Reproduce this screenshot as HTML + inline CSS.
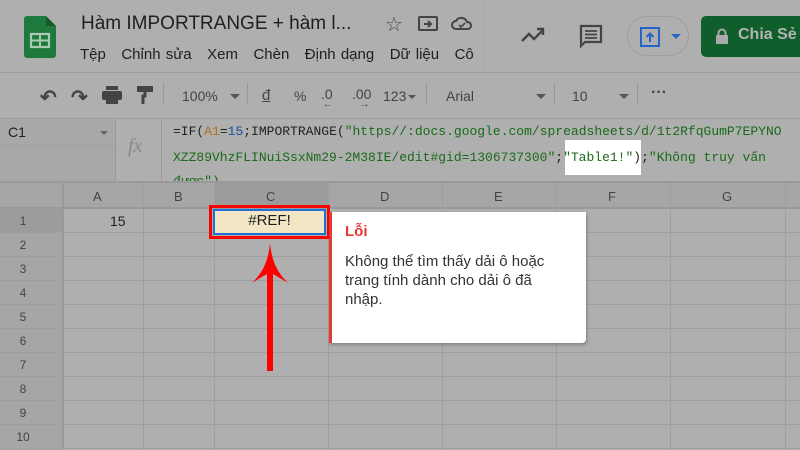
<!DOCTYPE html>
<html><head><meta charset="utf-8"><style>
*{margin:0;padding:0;box-sizing:border-box}
body{width:800px;height:450px;overflow:hidden;background:#afafaf;font-family:"Liberation Sans",Arial,sans-serif;position:relative;color:#202020}
.a{position:absolute;white-space:nowrap}
.mono{font-family:"Liberation Mono",monospace;font-size:13px;color:#1a6a1a}
.hl{position:absolute;background:#9f9f9f}
.vl{position:absolute;background:#9f9f9f}
.rn{position:absolute;left:0;width:46px;text-align:center;font-size:12px;color:#444}
</style></head><body>
<!-- top bar -->
<div class="a" style="left:0;top:72px;width:800px;height:1px;background:#9c9c9c"></div>
<div class="a" style="left:483px;top:0;width:1px;height:72px;background:#a5a5a5"></div>
<svg class="a" style="left:24px;top:16px" width="32" height="42" viewBox="0 0 32 42"><path d="M3 0h19l10 10v29a3 3 0 0 1-3 3H3a3 3 0 0 1-3-3V3a3 3 0 0 1 3-3z" fill="#1e7a3c"/><path d="M22 0v10h10z" fill="#155c2c"/><rect x="7" y="18" width="18" height="13" fill="none" stroke="#a9c9b2" stroke-width="2.2"/><path d="M7 24.5h18M16 18v13" stroke="#a9c9b2" stroke-width="2"/></svg>
<div class="a" style="left:81px;top:13px;font-size:19px">Hàm IMPORTRANGE + hàm l...</div>
<div class="a" style="left:385px;top:12px;font-size:20px;color:#444">☆</div>
<svg class="a" style="left:418px;top:15px" width="20" height="16"><rect x="1" y="2" width="18" height="13" rx="1" fill="none" stroke="#444" stroke-width="2"/><path d="M6 9h7M10 6l3 3-3 3" stroke="#444" stroke-width="2" fill="none"/></svg>
<svg class="a" style="left:451px;top:16px" width="22" height="14"><path d="M5 13a4 4 0 0 1 0-8 6 6 0 0 1 11 1 3.5 3.5 0 0 1 1 7z" fill="none" stroke="#444" stroke-width="2"/><path d="M8 9l2 2 4-4" stroke="#444" stroke-width="1.6" fill="none"/></svg>
<div class="a" style="left:80px;top:46px;font-size:15px;word-spacing:1px">Tệp&nbsp;&nbsp;&nbsp;Chỉnh sửa&nbsp;&nbsp;&nbsp;Xem&nbsp;&nbsp;&nbsp;Chèn&nbsp;&nbsp;&nbsp;Định dạng&nbsp;&nbsp;&nbsp;Dữ liệu&nbsp;&nbsp;&nbsp;Cô</div>
<svg class="a" style="left:520px;top:26px" width="26" height="18"><path d="M2 15l7-7 5 5 9-9M17 3h6v6" stroke="#444" stroke-width="2.4" fill="none"/></svg>
<svg class="a" style="left:579px;top:24px" width="24" height="24"><path d="M2 2h20v16H6l-4 4z" fill="none" stroke="#444" stroke-width="2.2"/><path d="M6 7h12M6 10.5h12M6 14h12" stroke="#444" stroke-width="1.8"/></svg>
<div class="a" style="left:627px;top:16px;width:62px;height:40px;border:1px solid #9e9e9e;border-radius:20px"></div>
<svg class="a" style="left:640px;top:27px" width="20" height="20"><rect x="1" y="1" width="18" height="18" fill="none" stroke="#2466c8" stroke-width="2"/><path d="M10 15V7M6.5 10l3.5-3.5 3.5 3.5" stroke="#2466c8" stroke-width="2" fill="none"/></svg>
<div class="a" style="left:671px;top:34px;border-left:5px solid transparent;border-right:5px solid transparent;border-top:5px solid #2466c8"></div>
<div class="a" style="left:701px;top:16px;width:110px;height:41px;background:#0f5e2c;border-radius:5px"></div>
<svg class="a" style="left:715px;top:28px" width="14" height="17"><rect x="1" y="7" width="12" height="9" rx="1" fill="#aaa"/><path d="M3.5 7V5a3.5 3.5 0 0 1 7 0v2" stroke="#aaa" stroke-width="2" fill="none"/></svg>
<div class="a" style="left:738px;top:26px;font-size:16px;font-weight:bold;color:#b3b3b3">Chia Sẻ</div>
<!-- toolbar -->
<div class="a" style="left:0;top:118px;width:800px;height:1px;background:#9c9c9c"></div>
<div class="a" style="left:40px;top:85px;font-size:20px;color:#444;font-weight:bold">↶</div>
<div class="a" style="left:71px;top:85px;font-size:20px;color:#444;font-weight:bold">↷</div>
<svg class="a" style="left:102px;top:86px" width="20" height="18"><rect x="0" y="5" width="20" height="9" rx="2" fill="#444"/><rect x="4" y="0" width="12" height="4" fill="#444"/><rect x="4" y="11" width="12" height="7" fill="#444"/></svg>
<svg class="a" style="left:137px;top:86px" width="16" height="18"><rect x="0" y="0" width="16" height="6" fill="#444"/><path d="M8 6v4h-2v8" stroke="#444" stroke-width="3" fill="none"/></svg>
<div class="a" style="left:163px;top:83px;width:1px;height:22px;background:#9a9a9a"></div>
<div class="a" style="left:182px;top:88px;font-size:14px;color:#444">100%</div>
<div class="a" style="left:230px;top:94px;border-left:5px solid transparent;border-right:5px solid transparent;border-top:5px solid #555"></div>
<div class="a" style="left:247px;top:83px;width:1px;height:22px;background:#9a9a9a"></div>
<div class="a" style="left:262px;top:87px;font-size:15px;color:#444;text-decoration:underline">đ</div>
<div class="a" style="left:294px;top:88px;font-size:14px;color:#444">%</div>
<div class="a" style="left:321px;top:86px;font-size:14px;color:#444">.0<span style="font-size:10px;position:relative;top:8px;left:-10px">←</span></div>
<div class="a" style="left:352px;top:86px;font-size:14px;color:#444">.00<span style="font-size:10px;position:relative;top:8px;left:-12px">→</span></div>
<div class="a" style="left:383px;top:88px;font-size:14px;color:#444">123</div>
<div class="a" style="left:408px;top:95px;border-left:4px solid transparent;border-right:4px solid transparent;border-top:4px solid #555"></div>
<div class="a" style="left:426px;top:83px;width:1px;height:22px;background:#9a9a9a"></div>
<div class="a" style="left:446px;top:88px;font-size:14px;color:#444">Arial</div>
<div class="a" style="left:536px;top:94px;border-left:5px solid transparent;border-right:5px solid transparent;border-top:5px solid #555"></div>
<div class="a" style="left:554px;top:83px;width:1px;height:22px;background:#9a9a9a"></div>
<div class="a" style="left:572px;top:88px;font-size:14px;color:#444">10</div>
<div class="a" style="left:619px;top:94px;border-left:5px solid transparent;border-right:5px solid transparent;border-top:5px solid #555"></div>
<div class="a" style="left:637px;top:83px;width:1px;height:22px;background:#9a9a9a"></div>
<div class="a" style="left:651px;top:84px;font-size:16px;color:#444;font-weight:bold">···</div>
<!-- formula bar -->
<div class="a" style="left:0;top:119px;width:115px;height:63px;background:#a8a8a8"></div>
<div class="a" style="left:0;top:145px;width:115px;height:1px;background:#a0a0a0"></div>
<div class="a" style="left:8px;top:124px;font-size:14px">C1</div>
<div class="a" style="left:100px;top:131px;border-left:4px solid transparent;border-right:4px solid transparent;border-top:4px solid #666"></div>
<div class="a" style="left:115px;top:119px;width:1px;height:63px;background:#9a9a9a"></div>
<div class="a" style="left:161px;top:119px;width:1px;height:63px;background:#9a9a9a"></div>
<div class="a" style="left:128px;top:135px;font-size:20px;font-style:italic;color:#888;font-family:'Liberation Serif',serif">fx</div>
<div class="a mono" style="left:173px;top:124px"><span style="color:#222">=IF(</span><span style="color:#b0701a">A1</span><span style="color:#222">=</span><span style="color:#1a4fa0">15</span><span style="color:#222">;IMPORTRANGE(</span>"https//:docs.google.com/spreadsheets/d/1t2RfqGumP7EPYNO</div>
<div class="a" style="left:565px;top:140px;width:76px;height:35px;background:#fff"></div>
<div class="a mono" style="left:173px;top:150px">XZZ89VhzFLINuiSsxNm29-2M38IE/edit#gid=1306737300"<span style="color:#222">;</span>"Table1!"<span style="color:#222">);</span>"Không truy vấn</div>
<div class="a mono" style="left:173px;top:175px;height:7px;overflow:hidden;line-height:14px">được")</div>
<div class="a" style="left:0;top:181px;width:800px;height:2px;background:#9a9a9a"></div>
<!-- column headers -->
<div class="a" style="left:0;top:183px;width:800px;height:25px;background:#a6a6a6"></div>
<div class="a" style="left:214px;top:183px;width:114px;height:25px;background:#9c9c9c"></div>
<div class="a" style="left:0;top:208px;width:62px;height:242px;background:#a6a6a6"></div>
<div class="a" style="left:0;top:208px;width:62px;height:24px;background:#9c9c9c"></div>
<div class="a" style="left:93px;top:189px;font-size:13px;color:#444">A</div>
<div class="a" style="left:174px;top:189px;font-size:13px;color:#444">B</div>
<div class="a" style="left:266px;top:189px;font-size:13px;color:#444">C</div>
<div class="a" style="left:380px;top:189px;font-size:13px;color:#444">D</div>
<div class="a" style="left:494px;top:189px;font-size:13px;color:#444">E</div>
<div class="a" style="left:608px;top:189px;font-size:13px;color:#444">F</div>
<div class="a" style="left:722px;top:189px;font-size:13px;color:#444">G</div>
<!-- grid -->
<div class="vl" style="left:62px;top:183px;width:2px;height:267px;background:#999"></div>
<div class="vl" style="left:143px;top:183px;width:1px;height:267px"></div>
<div class="vl" style="left:214px;top:183px;width:1px;height:267px"></div>
<div class="vl" style="left:328px;top:183px;width:1px;height:267px"></div>
<div class="vl" style="left:442px;top:183px;width:1px;height:267px"></div>
<div class="vl" style="left:556px;top:183px;width:1px;height:267px"></div>
<div class="vl" style="left:670px;top:183px;width:1px;height:267px"></div>
<div class="vl" style="left:785px;top:183px;width:1px;height:267px"></div>
<div class="hl" style="left:0;top:207px;width:800px;height:2px;background:#999"></div>
<div class="hl" style="left:0;top:232px;width:800px;height:1px"></div>
<div class="hl" style="left:0;top:256px;width:800px;height:1px"></div>
<div class="hl" style="left:0;top:280px;width:800px;height:1px"></div>
<div class="hl" style="left:0;top:304px;width:800px;height:1px"></div>
<div class="hl" style="left:0;top:328px;width:800px;height:1px"></div>
<div class="hl" style="left:0;top:352px;width:800px;height:1px"></div>
<div class="hl" style="left:0;top:376px;width:800px;height:1px"></div>
<div class="hl" style="left:0;top:400px;width:800px;height:1px"></div>
<div class="hl" style="left:0;top:424px;width:800px;height:1px"></div>
<div class="hl" style="left:0;top:448px;width:800px;height:1px"></div>
<div class="rn" style="top:214px">1</div>
<div class="rn" style="top:238px">2</div>
<div class="rn" style="top:262px">3</div>
<div class="rn" style="top:286px">4</div>
<div class="rn" style="top:310px">5</div>
<div class="rn" style="top:334px">6</div>
<div class="rn" style="top:358px">7</div>
<div class="rn" style="top:382px">8</div>
<div class="rn" style="top:406px">9</div>
<div class="rn" style="top:430px">10</div>
<div class="a" style="left:110px;top:213px;font-size:14px">15</div>
<!-- selected cell -->
<div class="a" style="left:209px;top:205px;width:121px;height:34px;border:3px solid #f00"></div>
<div class="a" style="left:213px;top:209px;width:113px;height:26px;background:#f2e6c4;border:2px solid #1f6fd6"></div>
<div class="a" style="left:213px;top:212px;width:113px;text-align:center;font-size:15px">#REF!</div>
<!-- arrow -->
<div class="a" style="left:267px;top:272px;width:6px;height:99px;background:#f00"></div>
<svg class="a" style="left:250px;top:243px" width="42" height="42"><path d="M20 0C18 20 12 30 2 40 12 34 16 31 20 30 24 31 28 34 38 40 28 30 22 20 20 0z" fill="#f00"/></svg>
<!-- popup -->
<div class="a" style="left:329px;top:212px;width:257px;height:131px;background:#fff;border-left:3px solid #e53935;border-radius:0 0 4px 0;box-shadow:1px 2px 3px rgba(0,0,0,.25)"></div>
<div class="a" style="left:345px;top:223px;font-size:15px;font-weight:bold;color:#e53935">Lỗi</div>
<div class="a" style="left:345px;top:252px;font-size:15px;line-height:19px;color:#333;white-space:normal;width:228px">Không thể tìm thấy dải ô hoặc trang tính dành cho dải ô đã nhập.</div>
</body></html>
